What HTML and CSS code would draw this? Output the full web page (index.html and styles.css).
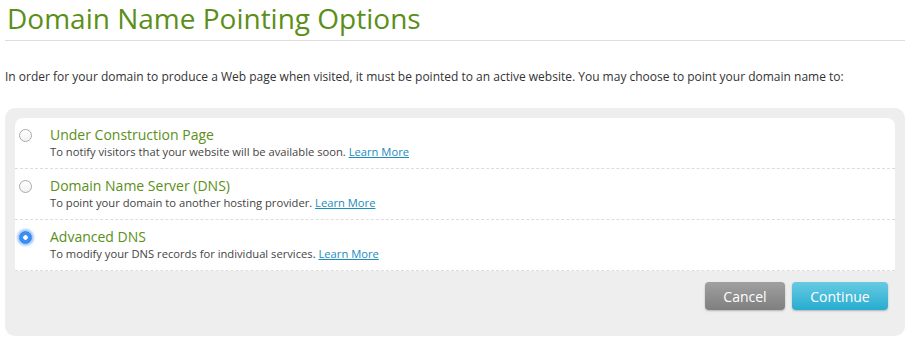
FILE: index.html
```html
<!DOCTYPE html>
<html lang="en">
<head>
  <meta charset="UTF-8">
  <meta name="viewport" content="width=device-width, initial-scale=1.0">
  <title>Domain Name Pointing Options</title>
  <link rel="stylesheet" href="styles.css">
</head>
<body>
  <h1 class="page-title">Domain Name Pointing Options</h1>
  <p class="intro">In order for your domain to produce a Web page when visited, it must be pointed to an active website. You may choose to point your domain name to:</p>

  <div class="panel">
    <div class="options">
      <label class="option">
        <span class="radio"></span>
        <span class="option-text">
          <span class="option-title">Under Construction Page</span>
          <span class="option-desc">To notify visitors that your website will be available soon. <a href="#">Learn More</a></span>
        </span>
      </label>
      <label class="option">
        <span class="radio"></span>
        <span class="option-text">
          <span class="option-title">Domain Name Server (DNS)</span>
          <span class="option-desc">To point your domain to another hosting provider. <a href="#">Learn More</a></span>
        </span>
      </label>
      <label class="option">
        <span class="radio checked"></span>
        <span class="option-text">
          <span class="option-title">Advanced DNS</span>
          <span class="option-desc">To modify your DNS records for individual services. <a href="#">Learn More</a></span>
        </span>
      </label>
    </div>
    <div class="actions">
      <button class="btn btn-cancel">Cancel</button>
      <button class="btn btn-continue">Continue</button>
    </div>
  </div>
</body>
</html>
```

FILE: styles.css
```css
body {
  margin: 0;
  padding: 0 8px 0 5px;
  font-family: "Open Sans", Arial, sans-serif;
  color: #333;
  background: #fff;
}
.page-title {
  margin: 0;
  padding: 1px 0 4px 2px;
  font-size: 28px;
  line-height: 35px;
  font-weight: normal;
  color: #5b8f19;
  border-bottom: 1px solid #ddd;
}
.intro {
  margin: 27px 0 22px;
  font-size: 12px;
  line-height: 18px;
  color: #333;
}
.panel {
  background: #eee;
  border-radius: 10px;
  padding: 10px 10px 26px;
}
.options {
  background: #fff;
  border-radius: 8px 8px 0 0;
}
.option {
  display: flex;
  align-items: flex-start;
  padding: 8px 0 0 4px;
  height: 42px;
  border-bottom: 1px dashed #ddd;
}
.radio {
  flex: none;
  width: 11px;
  height: 11px;
  margin-top: 3px;
  border: 1px solid #aaa;
  border-radius: 50%;
  background: linear-gradient(#fff, #f2f2f2);
}
.radio.checked {
  border-color: #2c7ee8;
  background: radial-gradient(circle, #fff 0 2px, #3d8ef3 2.5px);
  box-shadow: 0 0 2px 2px rgba(90, 160, 250, 0.55);
}
.option-text {
  display: flex;
  flex-direction: column;
  margin-left: 18px;
}
.option-title {
  font-size: 14px;
  line-height: 18px;
  color: #5b8f19;
}
.option-desc {
  font-size: 11.2px;
  line-height: 16px;
  color: #444;
}
.option-desc a {
  color: #1a8cbd;
}
.actions {
  display: flex;
  justify-content: flex-end;
  gap: 7px;
  margin-top: 11px;
  padding-right: 7px;
}
.btn {
  height: 28px;
  border: none;
  border-radius: 4px;
  font-family: "Open Sans", Arial, sans-serif;
  font-size: 14px;
  color: #fff;
  cursor: pointer;
  box-shadow: 0 1px 2px rgba(0, 0, 0, 0.25);
}
.btn-cancel {
  width: 80px;
  background: linear-gradient(#a0a0a0, #7f7f7f);
}
.btn-continue {
  width: 96px;
  background: linear-gradient(#66cbe2, #28acd0);
}
```
